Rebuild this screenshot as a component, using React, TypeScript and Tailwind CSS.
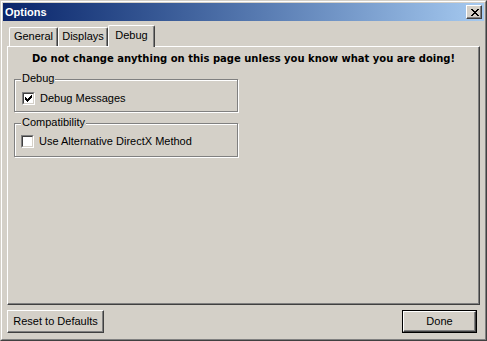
const CHECK = [
  '......#',
  '.....##',
  '#...###',
  '##.###.',
  '#####..',
  '.###...',
  '..#....',
];

const CLOSE_X = [
  '##....##',
  '.##..##.',
  '..####..',
  '...##...',
  '..####..',
  '.##..##.',
  '##....##',
];

function Bitmap({ rows }: { rows: string[] }) {
  return (
    <svg width={rows[0].length} height={rows.length} shapeRendering="crispEdges" className="block">
      {rows.map((r, y) =>
        r.split('').map((c, x) => (c === '#' ? <rect key={`${x}-${y}`} x={x} y={y} width={1} height={1} fill="#000" /> : null))
      )}
    </svg>
  );
}

function Checkbox({ checked, label }: { checked: boolean; label: string }) {
  return (
    <div className="flex items-center">
      <div className="w-[13px] h-[13px] border border-t-[#808080] border-l-[#808080] border-r-white border-b-white">
        <div className="w-[11px] h-[11px] bg-white border border-t-[#404040] border-l-[#404040] border-r-[#D4D0C8] border-b-[#D4D0C8] flex items-center justify-center">
          {checked && <Bitmap rows={CHECK} />}
        </div>
      </div>
      <span className="ml-[5px] leading-[13px]">{label}</span>
    </div>
  );
}

function GroupBox({ title, className, children }: { title: string; className: string; children: React.ReactNode }) {
  return (
    <div className={`relative w-[224px] border border-[#808080] shadow-[inset_1px_1px_0_#fff,1px_1px_0_#fff] ${className}`}>
      <span className="absolute left-[6px] top-[-8px] px-px bg-[#D4D0C8] leading-[13px]">{title}</span>
      {children}
    </div>
  );
}

function Tab({ label, w, active }: { label: string; w: string; active?: boolean }) {
  return (
    <div
      className={`${w} ${active ? 'h-[22px] -mb-px -ml-[2px] relative z-10 pt-[3px]' : 'h-[19px] pt-[2px]'} bg-[#D4D0C8] rounded-t-[2px] border-t border-l border-r border-t-white border-l-white border-r-[#404040] shadow-[inset_-1px_0_0_#808080] text-center leading-[13px]`}
    >
      {label}
    </div>
  );
}

function Button({ label, w, isDefault }: { label: string; w: string; isDefault?: boolean }) {
  const inner = (
    <div className="h-full border border-t-white border-l-white border-r-[#404040] border-b-[#404040] shadow-[inset_-1px_-1px_0_#808080] flex items-center justify-center leading-[13px]">
      {label}
    </div>
  );
  return (
    <div className={`${w} h-[23px] ${isDefault ? 'border border-black' : ''}`}>{inner}</div>
  );
}

export default function App() {
  return (
    <div className="w-[487px] h-[341px] bg-[#D4D0C8] border border-t-[#D4D0C8] border-l-[#D4D0C8] border-r-[#404040] border-b-[#404040] font-['Liberation_Sans',Arial,sans-serif] text-[11px] text-black">
      <div className="h-full border border-t-white border-l-white border-r-[#808080] border-b-[#808080] p-px flex flex-col">
        <div className="h-[18px] bg-gradient-to-r from-[#0A246A] to-[#A6CAF0] flex items-center justify-between pl-[2px] pr-[2px]">
          <span className="text-white font-bold leading-[13px]">Options</span>
          <div className="w-[16px] h-[14px] bg-[#D4D0C8] border border-t-white border-l-white border-r-[#404040] border-b-[#404040] shadow-[inset_-1px_-1px_0_#808080] flex items-center justify-center pl-px">
            <Bitmap rows={CLOSE_X} />
          </div>
        </div>

        <div className="flex-1 flex flex-col px-[4px] pt-[4px]">
          <div className="flex items-end h-[21px] pl-[2px]">
            <Tab label="General" w="w-[49px]" />
            <Tab label="Displays" w="w-[50px]" />
            <div className="w-[2px]" />
            <Tab label="Debug" w="w-[47px]" active />
          </div>

          <div className="h-[259px] border border-t-white border-l-white border-r-[#404040] border-b-[#404040] shadow-[inset_-1px_-1px_0_#808080] pt-[5px]">
            <p className="text-center font-bold font-['DejaVu_Sans',Verdana,sans-serif] text-[10px] leading-[13px]">
              Do not change anything on this page unless you know what you are doing!
            </p>
            <GroupBox title="Debug" className="ml-[6px] mt-[14px] h-[33px] pl-[7px] pt-[12px]">
              <Checkbox checked label="Debug Messages" />
            </GroupBox>
            <GroupBox title="Compatibility" className="ml-[6px] mt-[11px] h-[34px] pl-[6px] pt-[11px]">
              <Checkbox checked={false} label="Use Alternative DirectX Method" />
            </GroupBox>
          </div>

          <div className="flex justify-between mt-[5px] pr-[3px]">
            <Button label="Reset to Defaults" w="w-[97px]" />
            <Button label="Done" w="w-[75px]" isDefault />
          </div>
        </div>
      </div>
    </div>
  );
}
